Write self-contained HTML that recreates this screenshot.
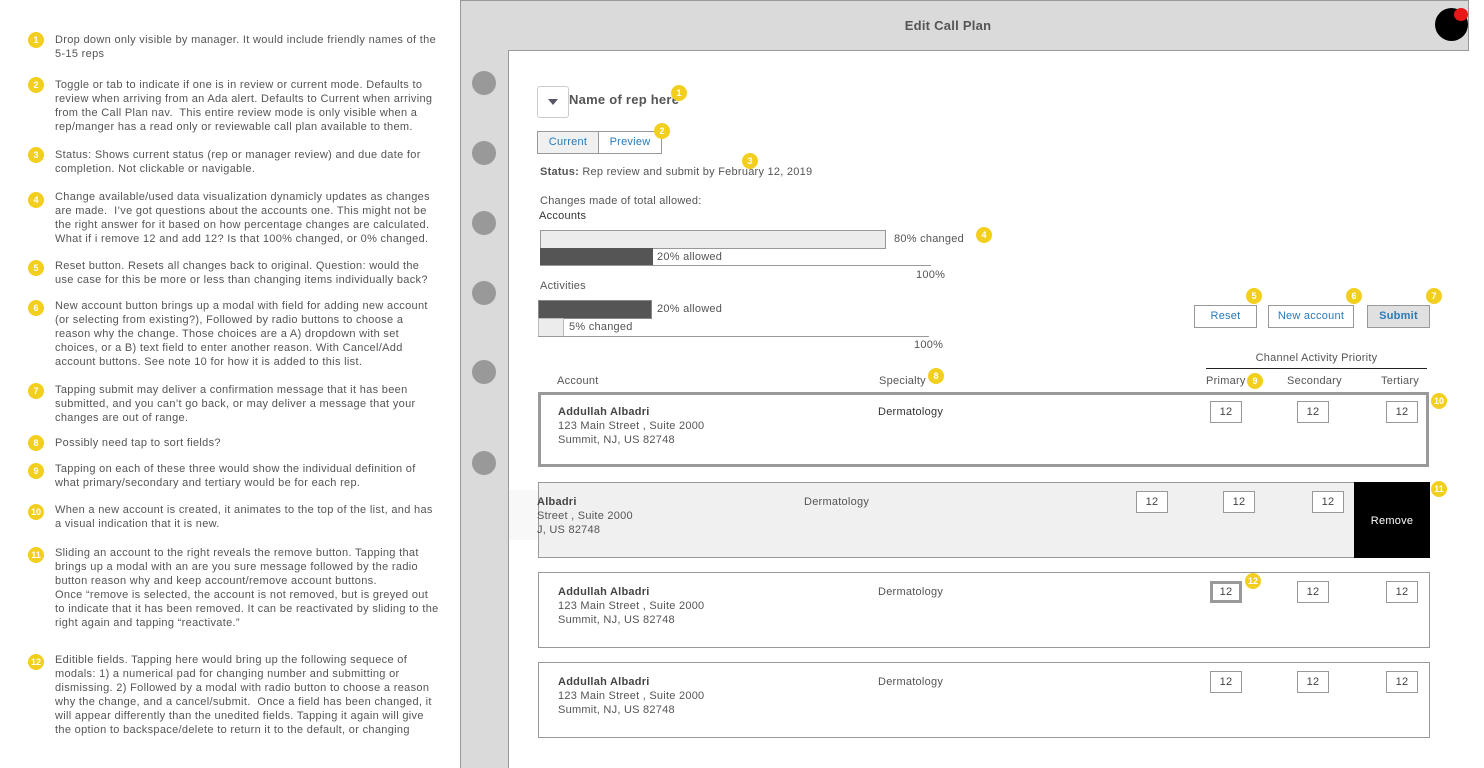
<!DOCTYPE html>
<html><head><meta charset="utf-8"><style>
*{margin:0;padding:0;box-sizing:border-box}
body{width:1484px;height:768px;position:relative;background:#fff;font-family:"Liberation Sans",sans-serif;color:#555;overflow:hidden;font-size:11px;letter-spacing:0.25px}
.a{position:absolute}
.b{position:absolute;width:16px;height:16px;border-radius:50%;background:#f2cf1f;color:#fff;font-size:9px;font-weight:bold;text-align:center;line-height:16px;letter-spacing:0}
.n{position:absolute;left:55px;width:386px;line-height:14px;font-size:11px;color:#555;letter-spacing:0.32px}
.nb{position:absolute;left:28px}
.dot{position:absolute;left:472px;width:24px;height:24px;border-radius:50%;background:#999}
.box{position:absolute;width:32px;height:22px;border:1px solid #999;background:#fff;text-align:center;line-height:20px;font-size:11px;color:#444}
.row{position:absolute;left:538px;border:1px solid #999}
.nm{font-weight:bold;color:#444}
.t{position:absolute;font-size:11px;line-height:14px;color:#555}
.btn{position:absolute;height:23px;border:1px solid #999;color:#2a7ab8;text-align:center;line-height:21px;font-size:11px;background:#fff}
</style></head><body>

<div class="b nb" style="top:32px">1</div>
<div class="n" style="top:33px">Drop down only visible by manager. It would include friendly names of the 5-15 reps</div>
<div class="b nb" style="top:77px">2</div>
<div class="n" style="top:78px">Toggle or tab to indicate if one is in review or current mode. Defaults to review when arriving from an Ada alert. Defaults to Current when arriving from the Call Plan nav.&nbsp; This entire review mode is only visible when a rep/manger has a read only or reviewable call plan available to them.</div>
<div class="b nb" style="top:147px">3</div>
<div class="n" style="top:148px">Status: Shows current status (rep or manager review) and due date for completion. Not clickable or navigable.</div>
<div class="b nb" style="top:192px">4</div>
<div class="n" style="top:190px">Change available/used data visualization dynamicly updates as changes are made.&nbsp; I’ve got questions about the accounts one. This might not be the right answer for it based on how percentage changes are calculated. What if i remove 12 and add 12? Is that 100% changed, or 0% changed.</div>
<div class="b nb" style="top:260px">5</div>
<div class="n" style="top:259px">Reset button. Resets all changes back to original. Question: would the use case for this be more or less than changing items individually back?</div>
<div class="b nb" style="top:300px">6</div>
<div class="n" style="top:299px">New account button brings up a modal with field for adding new account (or selecting from existing?), Followed by radio buttons to choose a reason why the change. Those choices are a A) dropdown with set choices, or a B) text field to enter another reason. With Cancel/Add account buttons. See note 10 for how it is added to this list.</div>
<div class="b nb" style="top:383px">7</div>
<div class="n" style="top:383px">Tapping submit may deliver a confirmation message that it has been submitted, and you can’t go back, or may deliver a message that your changes are out of range.</div>
<div class="b nb" style="top:435px">8</div>
<div class="n" style="top:436px">Possibly need tap to sort fields?</div>
<div class="b nb" style="top:463px">9</div>
<div class="n" style="top:462px">Tapping on each of these three would show the individual definition of what primary/secondary and tertiary would be for each rep.</div>
<div class="b nb" style="top:504px">10</div>
<div class="n" style="top:503px">When a new account is created, it animates to the top of the list, and has a visual indication that it is new.</div>
<div class="b nb" style="top:547px">11</div>
<div class="n" style="top:546px">Sliding an account to the right reveals the remove button. Tapping that brings up a modal with an are you sure message followed by the radio button reason why and keep account/remove account buttons.<br>Once “remove is selected, the account is not removed, but is greyed out to indicate that it has been removed. It can be reactivated by sliding to the right again and tapping “reactivate.”</div>
<div class="b nb" style="top:654px">12</div>
<div class="n" style="top:653px">Editible fields. Tapping here would bring up the following sequece of modals: 1) a numerical pad for changing number and submitting or dismissing. 2) Followed by a modal with radio button to choose a reason why the change, and a cancel/submit.&nbsp; Once a field has been changed, it will appear differently than the unedited fields. Tapping it again will give the option to backspace/delete to return it to the default, or changing</div>

<!-- frame -->
<div class="a" style="left:460px;top:0;width:1009px;height:51px;background:#dadada;border:1px solid #999"></div>
<div class="a" style="left:460px;top:50px;width:49px;height:718px;background:#dadada;border-left:1px solid #999;border-right:1px solid #999"></div>
<div class="a" style="left:460px;top:18px;width:976px;text-align:center;font-size:13px;font-weight:bold;color:#555">Edit Call Plan</div>
<div class="a" style="left:1435px;top:8px;width:33px;height:33px;border-radius:50%;background:#000"></div>
<div class="a" style="left:1454px;top:8px;width:14px;height:13px;border-radius:50%;background:#e81818"></div>
<div class="dot" style="top:71px"></div><div class="dot" style="top:141px"></div><div class="dot" style="top:211px"></div><div class="dot" style="top:281px"></div><div class="dot" style="top:360px"></div><div class="dot" style="top:451px"></div>

<!-- top content -->
<div class="a" style="left:537px;top:86px;width:32px;height:32px;border:1px solid #ccc;border-radius:3px;background:#fff"></div>
<div class="a" style="left:548px;top:99px;width:0;height:0;border-left:5px solid transparent;border-right:5px solid transparent;border-top:6px solid #556"></div>
<div class="t" style="left:569px;top:93px;font-size:13px;font-weight:bold;color:#555">Name of rep here</div>
<div class="b" style="left:671px;top:85px">1</div>
<div class="a" style="left:537px;top:131px;width:62px;height:23px;border:1px solid #999;background:#f0f0f0;color:#2a7ab8;text-align:center;line-height:21px">Current</div>
<div class="a" style="left:598px;top:131px;width:64px;height:23px;border:1px solid #999;background:#fff;color:#2a7ab8;text-align:center;line-height:21px">Preview</div>
<div class="b" style="left:654px;top:123px">2</div>
<div class="t" style="left:540px;top:165px"><b>Status:</b> Rep review and submit by February 12, 2019</div>
<div class="b" style="left:742px;top:153px">3</div>
<div class="t" style="left:540px;top:194px">Changes made of total allowed:</div>
<div class="t" style="left:539px;top:209px;color:#333">Accounts</div>
<div class="a" style="left:540px;top:230px;width:346px;height:19px;background:#ececec;border:1px solid #999"></div>
<div class="t" style="left:894px;top:232px">80% changed</div>
<div class="b" style="left:976px;top:227px">4</div>
<div class="a" style="left:540px;top:248px;width:113px;height:18px;background:#555"></div>
<div class="a" style="left:540px;top:265px;width:391px;height:1px;background:#999"></div>
<div class="t" style="left:657px;top:250px">20% allowed</div>
<div class="t" style="left:916px;top:268px">100%</div>
<div class="t" style="left:540px;top:279px">Activities</div>
<div class="a" style="left:538px;top:300px;width:114px;height:19px;background:#555;border:1px solid #888"></div>
<div class="t" style="left:657px;top:302px">20% allowed</div>
<div class="a" style="left:538px;top:318px;width:26px;height:19px;background:#ececec;border:1px solid #bbb"></div>
<div class="t" style="left:569px;top:320px">5% changed</div>
<div class="a" style="left:538px;top:336px;width:391px;height:1px;background:#999"></div>
<div class="t" style="left:914px;top:338px">100%</div>

<!-- buttons -->
<div class="btn" style="left:1194px;top:305px;width:63px">Reset</div>
<div class="btn" style="left:1268px;top:305px;width:86px">New account</div>
<div class="btn" style="left:1367px;top:305px;width:63px;background:#e0e0e0;font-weight:bold">Submit</div>
<div class="b" style="left:1246px;top:288px">5</div>
<div class="b" style="left:1346px;top:288px">6</div>
<div class="b" style="left:1426px;top:288px">7</div>

<div class="t" style="left:1206px;top:351px;width:221px;text-align:center">Channel Activity Priority</div>
<div class="a" style="left:1206px;top:368px;width:221px;height:1px;background:#222"></div>
<div class="t" style="left:557px;top:374px">Account</div>
<div class="t" style="left:879px;top:374px">Specialty</div>
<div class="b" style="left:928px;top:368px">8</div>
<div class="t" style="left:1206px;top:374px">Primary</div>
<div class="b" style="left:1247px;top:373px">9</div>
<div class="t" style="left:1287px;top:374px">Secondary</div>
<div class="t" style="left:1381px;top:374px">Tertiary</div>

<!-- row1 -->
<div class="row" style="top:392px;width:891px;height:75px;border:3px solid #999"></div>
<div class="t" style="left:558px;top:405px"><span class="nm">Addullah Albadri</span><br>123 Main Street , Suite 2000<br>Summit, NJ, US 82748</div>
<div class="t" style="left:878px;top:405px;color:#333">Dermatology</div>
<div class="box" style="left:1210px;top:401px">12</div><div class="box" style="left:1297px;top:401px">12</div><div class="box" style="left:1386px;top:401px">12</div>
<div class="b" style="left:1431px;top:393px">10</div>

<!-- row2 -->
<div class="a" style="left:509px;top:490px;width:30px;height:50px;background:#f8f8f8"></div>
<div class="row" style="top:482px;width:817px;height:76px;background:#f0f0f0;border-right:none"></div>
<div class="t" style="left:537px;top:495px;width:200px;overflow:hidden;white-space:nowrap"><span class="nm">Albadri</span><br>Street , Suite 2000<br>J, US 82748</div>
<div class="t" style="left:804px;top:495px">Dermatology</div>
<div class="box" style="left:1136px;top:491px">12</div><div class="box" style="left:1223px;top:491px">12</div><div class="box" style="left:1312px;top:491px">12</div>
<div class="a" style="left:1354px;top:482px;width:76px;height:76px;background:#000;color:#fff;text-align:center;line-height:78px;font-size:11px">Remove</div>
<div class="b" style="left:1431px;top:481px">11</div>

<!-- row3 -->
<div class="row" style="top:572px;width:892px;height:76px"></div>
<div class="t" style="left:558px;top:585px"><span class="nm">Addullah Albadri</span><br>123 Main Street , Suite 2000<br>Summit, NJ, US 82748</div>
<div class="t" style="left:878px;top:585px">Dermatology</div>
<div class="box" style="left:1210px;top:581px;border:3px solid #999;line-height:16px">12</div><div class="box" style="left:1297px;top:581px">12</div><div class="box" style="left:1386px;top:581px">12</div>
<div class="b" style="left:1245px;top:573px">12</div>

<!-- row4 -->
<div class="row" style="top:662px;width:892px;height:76px"></div>
<div class="t" style="left:558px;top:675px"><span class="nm">Addullah Albadri</span><br>123 Main Street , Suite 2000<br>Summit, NJ, US 82748</div>
<div class="t" style="left:878px;top:675px">Dermatology</div>
<div class="box" style="left:1210px;top:671px">12</div><div class="box" style="left:1297px;top:671px">12</div><div class="box" style="left:1386px;top:671px">12</div>
</body></html>
